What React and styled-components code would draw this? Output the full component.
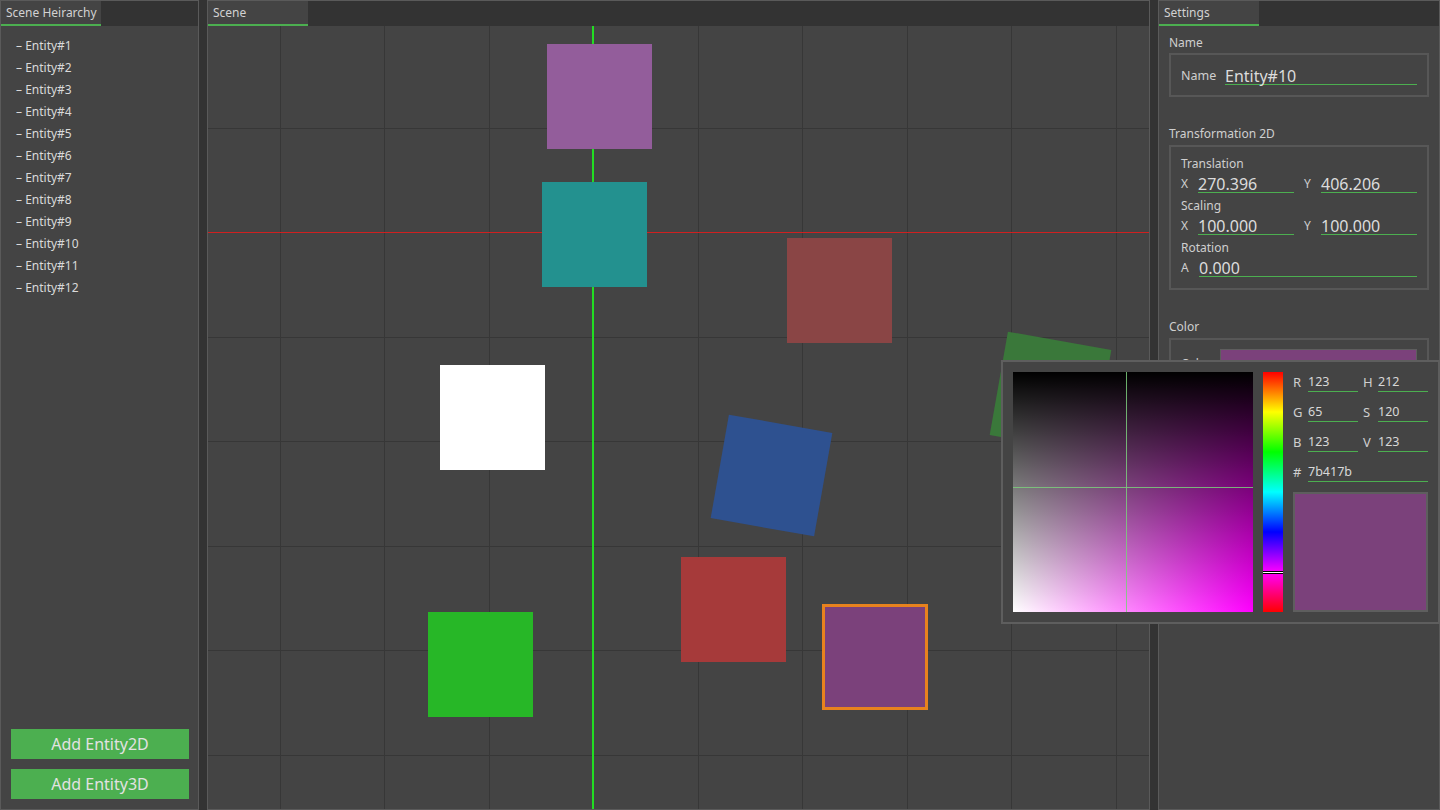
import React from 'react';
import styled, { createGlobalStyle } from 'styled-components';

const Global = createGlobalStyle`
  html, body { margin: 0; padding: 0; background: #333; overflow: hidden; }
  body { font-family: "Noto Sans", "Open Sans", sans-serif; color: #d6d6d6; }
  * { box-sizing: border-box; }
`;

const Layout = styled.div`
  position: relative;
  display: flex;
  gap: 8px;
  width: 1440px;
  height: 810px;
  background: #333;
`;

const Panel = styled.section`
  width: ${p => p.$w}px;
  flex-shrink: 0;
  height: 100%;
  display: flex;
  flex-direction: column;
  background: #444;
  border: 1px solid #5a5a5a;
`;

const TabBar = styled.div`
  height: 25px;
  flex-shrink: 0;
  display: flex;
  background: #333;
`;

const Tab = styled.div`
  width: 100px;
  height: 25px;
  background: #444;
  border-bottom: 2px solid #4caf50;
  padding-left: 5px;
  font-size: 12px;
  line-height: 23px;
  color: #d2d2d2;
  white-space: nowrap;
`;

/* ---------- left: hierarchy ---------- */
const HierarchyBody = styled.div`
  flex: 1;
  display: flex;
  flex-direction: column;
  padding: 9px 9px 10px 10px;
`;

const EntityList = styled.ul`
  flex: 1;
  list-style: none;
  margin: 0;
  padding: 0 0 0 5px;
`;

const EntityItem = styled.li`
  height: 22px;
  line-height: 22px;
  font-size: 12px;
  color: #dadada;
  white-space: nowrap;
`;

const AddButton = styled.button`
  display: block;
  width: 100%;
  height: 30px;
  border: none;
  background: #4caf50;
  color: #e2e2e2;
  font-family: inherit;
  font-size: 16px;
  padding: 0;
  & + & { margin-top: 10px; }
`;

/* ---------- scene ---------- */
const Canvas = styled.div`
  position: relative;
  flex: 1;
  overflow: hidden;
  background: #444;
`;

const GridSvg = styled.svg`
  position: absolute;
  left: 0;
  top: 0;
`;

const AxisY = styled.div`
  position: absolute;
  left: ${p => p.$x}px;
  top: 0;
  width: 2px;
  height: 100%;
  background: #22dd22;
`;

const AxisX = styled.div`
  position: absolute;
  top: ${p => p.$y}px;
  left: 0;
  height: 1px;
  width: 100%;
  background: #d02020;
`;

const Square = styled.div`
  position: absolute;
  left: ${p => p.$x}px;
  top: ${p => p.$y}px;
  width: ${p => (p.$selected ? 106 : 105)}px;
  height: ${p => (p.$selected ? 106 : 105)}px;
  background: ${p => p.$color};
  transform: rotate(${p => p.$rot || 0}deg);
  border: ${p => (p.$selected ? '3px solid #e8821e' : 'none')};
`;

/* ---------- settings ---------- */
const SettingsBody = styled.div`
  flex: 1;
  padding: 7px 10px 0 10px;
  display: flex;
  flex-direction: column;
  gap: 27px;
`;

const Section = styled.div``;

const SectionLabel = styled.div`
  height: 20px;
  line-height: 20px;
  font-size: 12px;
  color: #cfcfcf;
  margin-bottom: ${p => p.$mb || 0}px;
`;

const Box = styled.div`
  border: 2px solid #575757;
  padding: ${p => p.$pad};
`;

const FieldRow = styled.div`
  display: flex;
  align-items: flex-end;
  gap: 10px;
  height: 20px;
`;

const FieldGroup = styled.div`
  flex: 1;
  display: flex;
  align-items: flex-start;
  min-width: 0;
  height: 20px;
`;

const FieldLabel = styled.span`
  width: ${p => p.$w}px;
  flex-shrink: 0;
  height: 20px;
  font-size: ${p => p.$size || 12}px;
  color: #cfcfcf;
  line-height: 22px;
`;

const Input = styled.div`
  flex: 1;
  height: 20px;
  padding-top: 3px;
  border-bottom: 1px solid #4caf50;
  font-size: 16px;
  line-height: 16px;
  color: #dcdcdc;
  white-space: nowrap;
`;

const SubLabel = styled.div`
  height: 18px;
  line-height: 18px;
  font-size: 12px;
  color: #cfcfcf;
  margin-top: ${p => p.$mt || 0}px;
`;

const ColorRow = styled.div`
  display: flex;
  align-items: center;
`;

const ColorLabel = styled.span`
  width: 39px;
  flex-shrink: 0;
  font-size: 12px;
  color: #cfcfcf;
`;

const Swatch = styled.div`
  flex: 1;
  height: 28px;
  background: #7b417b;
  border: 1px solid #5e5e5e;
`;

/* ---------- color picker popup ---------- */
const Picker = styled.div`
  position: absolute;
  left: 1001px;
  top: 360px;
  width: 439px;
  height: 264px;
  background: #444;
  border: 2px solid #5e5e5e;
  padding: 10px;
  display: flex;
  gap: 10px;
`;

const SVArea = styled.div`
  position: relative;
  width: 240px;
  height: 240px;
  flex-shrink: 0;
  background:
    linear-gradient(to bottom, #000, rgba(0, 0, 0, 0)),
    linear-gradient(to right, #fff, #f0f);
`;

const CrossV = styled.div`
  position: absolute;
  left: ${p => p.$x}px;
  top: 0;
  width: 1px;
  height: 100%;
  background: rgba(125, 205, 125, 0.85);
`;

const CrossH = styled.div`
  position: absolute;
  top: ${p => p.$y}px;
  left: 0;
  height: 1px;
  width: 100%;
  background: rgba(125, 205, 125, 0.85);
`;

const HueBar = styled.div`
  position: relative;
  width: 20px;
  height: 240px;
  flex-shrink: 0;
  background: linear-gradient(to bottom, #f00 0%, #ff0 16.67%, #0f0 33.33%, #0ff 50%, #00f 66.67%, #f0f 83.33%, #f00 100%);
`;

const HueMarker = styled.div`
  position: absolute;
  left: 0;
  top: ${p => p.$y}px;
  width: 100%;
  height: 3px;
  background: #fff;
  border-top: 1px solid #000;
  border-bottom: 1px solid #000;
`;

const PickerSide = styled.div`
  width: 135px;
  display: flex;
  flex-direction: column;
  gap: 10px;
`;

const PickRow = styled.div`
  display: flex;
  height: 20px;
  gap: 5px;
`;

const PickGroup = styled.div`
  flex: 1;
  display: flex;
`;

const PickLabel = styled.span`
  width: 15px;
  flex-shrink: 0;
  font-size: 13px;
  line-height: 20px;
  color: #cfcfcf;
`;

const PickInput = styled.div`
  flex: 1;
  height: 20px;
  border-bottom: 1px solid #4caf50;
  font-size: 12.5px;
  line-height: 19px;
  color: #d8d8d8;
`;

const Preview = styled.div`
  flex: 1;
  background: #7b417b;
  border: 2px solid #5e5e5e;
`;

/* ---------- data ---------- */
const entities = Array.from({ length: 12 }, (_, i) => `Entity#${i + 1}`);

const shapes = [
  { x: 339, y: 18, color: '#935d9b' },
  { x: 334, y: 156, color: '#23918f' },
  { x: 579, y: 212, color: '#8a4545' },
  { x: 789.5, y: 313.5, color: '#3a783a', rot: 10 },
  { x: 232, y: 339, color: '#ffffff' },
  { x: 510.5, y: 396.5, color: '#2e5190', rot: 10 },
  { x: 473, y: 531, color: '#a63a3a' },
  { x: 220, y: 586, color: '#27b727' },
  { x: 614, y: 578, color: '#7b417b', selected: true },
];

const CW = 941;
const CH = 783;
const OX = 385;
const OY = 206;
const STEP = 104.5;

function Grid() {
  const vx = [];
  for (let k = -4; k <= 6; k++) {
    const x = Math.round(OX + k * STEP);
    if (x > 0 && x < CW && k !== 0) vx.push(x);
  }
  const hy = [];
  for (let k = -3; k <= 6; k++) {
    const y = Math.round(OY + k * STEP);
    if (y > 0 && y < CH && k !== 0) hy.push(y);
  }
  return (
    <GridSvg width={CW} height={CH} shapeRendering="crispEdges">
      {vx.map(x => (
        <rect key={'v' + x} x={x} y={0} width={1} height={CH} fill="#373737" />
      ))}
      {hy.map(y => (
        <rect key={'h' + y} x={0} y={y} width={CW} height={1} fill="#373737" />
      ))}
    </GridSvg>
  );
}

export default function App() {
  return (
    <>
      <Global />
      <Layout>
        <Panel $w={199}>
          <TabBar><Tab>Scene Heirarchy</Tab></TabBar>
          <HierarchyBody>
            <EntityList>
              {entities.map(e => (
                <EntityItem key={e}>– {e}</EntityItem>
              ))}
            </EntityList>
            <AddButton>Add Entity2D</AddButton>
            <AddButton>Add Entity3D</AddButton>
          </HierarchyBody>
        </Panel>

        <Panel $w={943}>
          <TabBar><Tab>Scene</Tab></TabBar>
          <Canvas>
            <Grid />
            <AxisX $y={OY} />
            <AxisY $x={OX - 1} />
            {shapes.map((s, i) => (
              <Square key={i} $x={s.x} $y={s.y} $color={s.color} $rot={s.rot} $selected={s.selected} />
            ))}
          </Canvas>
        </Panel>

        <Panel $w={282}>
          <TabBar><Tab>Settings</Tab></TabBar>
          <SettingsBody>
            <Section>
              <SectionLabel>Name</SectionLabel>
              <Box $pad="10px">
                <FieldRow>
                  <FieldGroup>
                    <FieldLabel $w={44} $size={12.5}>Name</FieldLabel>
                    <Input>Entity#10</Input>
                  </FieldGroup>
                </FieldRow>
              </Box>
            </Section>

            <Section>
              <SectionLabel $mb={1}>Transformation 2D</SectionLabel>
              <Box $pad="8px 10px 11px 10px">
                <SubLabel>Translation</SubLabel>
                <FieldRow>
                  <FieldGroup>
                    <FieldLabel $w={17}>X</FieldLabel>
                    <Input>270.396</Input>
                  </FieldGroup>
                  <FieldGroup>
                    <FieldLabel $w={17}>Y</FieldLabel>
                    <Input>406.206</Input>
                  </FieldGroup>
                </FieldRow>
                <SubLabel $mt={4}>Scaling</SubLabel>
                <FieldRow>
                  <FieldGroup>
                    <FieldLabel $w={17}>X</FieldLabel>
                    <Input>100.000</Input>
                  </FieldGroup>
                  <FieldGroup>
                    <FieldLabel $w={17}>Y</FieldLabel>
                    <Input>100.000</Input>
                  </FieldGroup>
                </FieldRow>
                <SubLabel $mt={4}>Rotation</SubLabel>
                <FieldRow>
                  <FieldGroup>
                    <FieldLabel $w={18}>A</FieldLabel>
                    <Input>0.000</Input>
                  </FieldGroup>
                </FieldRow>
              </Box>
            </Section>

            <Section>
              <SectionLabel $mb={1}>Color</SectionLabel>
              <Box $pad="9px 10px">
                <ColorRow>
                  <ColorLabel>Color</ColorLabel>
                  <Swatch />
                </ColorRow>
              </Box>
            </Section>
          </SettingsBody>
        </Panel>

        <Picker>
          <SVArea>
            <CrossV $x={113} />
            <CrossH $y={115} />
          </SVArea>
          <HueBar>
            <HueMarker $y={199} />
          </HueBar>
          <PickerSide>
            <PickRow>
              <PickGroup><PickLabel>R</PickLabel><PickInput>123</PickInput></PickGroup>
              <PickGroup><PickLabel>H</PickLabel><PickInput>212</PickInput></PickGroup>
            </PickRow>
            <PickRow>
              <PickGroup><PickLabel>G</PickLabel><PickInput>65</PickInput></PickGroup>
              <PickGroup><PickLabel>S</PickLabel><PickInput>120</PickInput></PickGroup>
            </PickRow>
            <PickRow>
              <PickGroup><PickLabel>B</PickLabel><PickInput>123</PickInput></PickGroup>
              <PickGroup><PickLabel>V</PickLabel><PickInput>123</PickInput></PickGroup>
            </PickRow>
            <PickRow>
              <PickGroup><PickLabel>#</PickLabel><PickInput>7b417b</PickInput></PickGroup>
            </PickRow>
            <Preview />
          </PickerSide>
        </Picker>
      </Layout>
    </>
  );
}
